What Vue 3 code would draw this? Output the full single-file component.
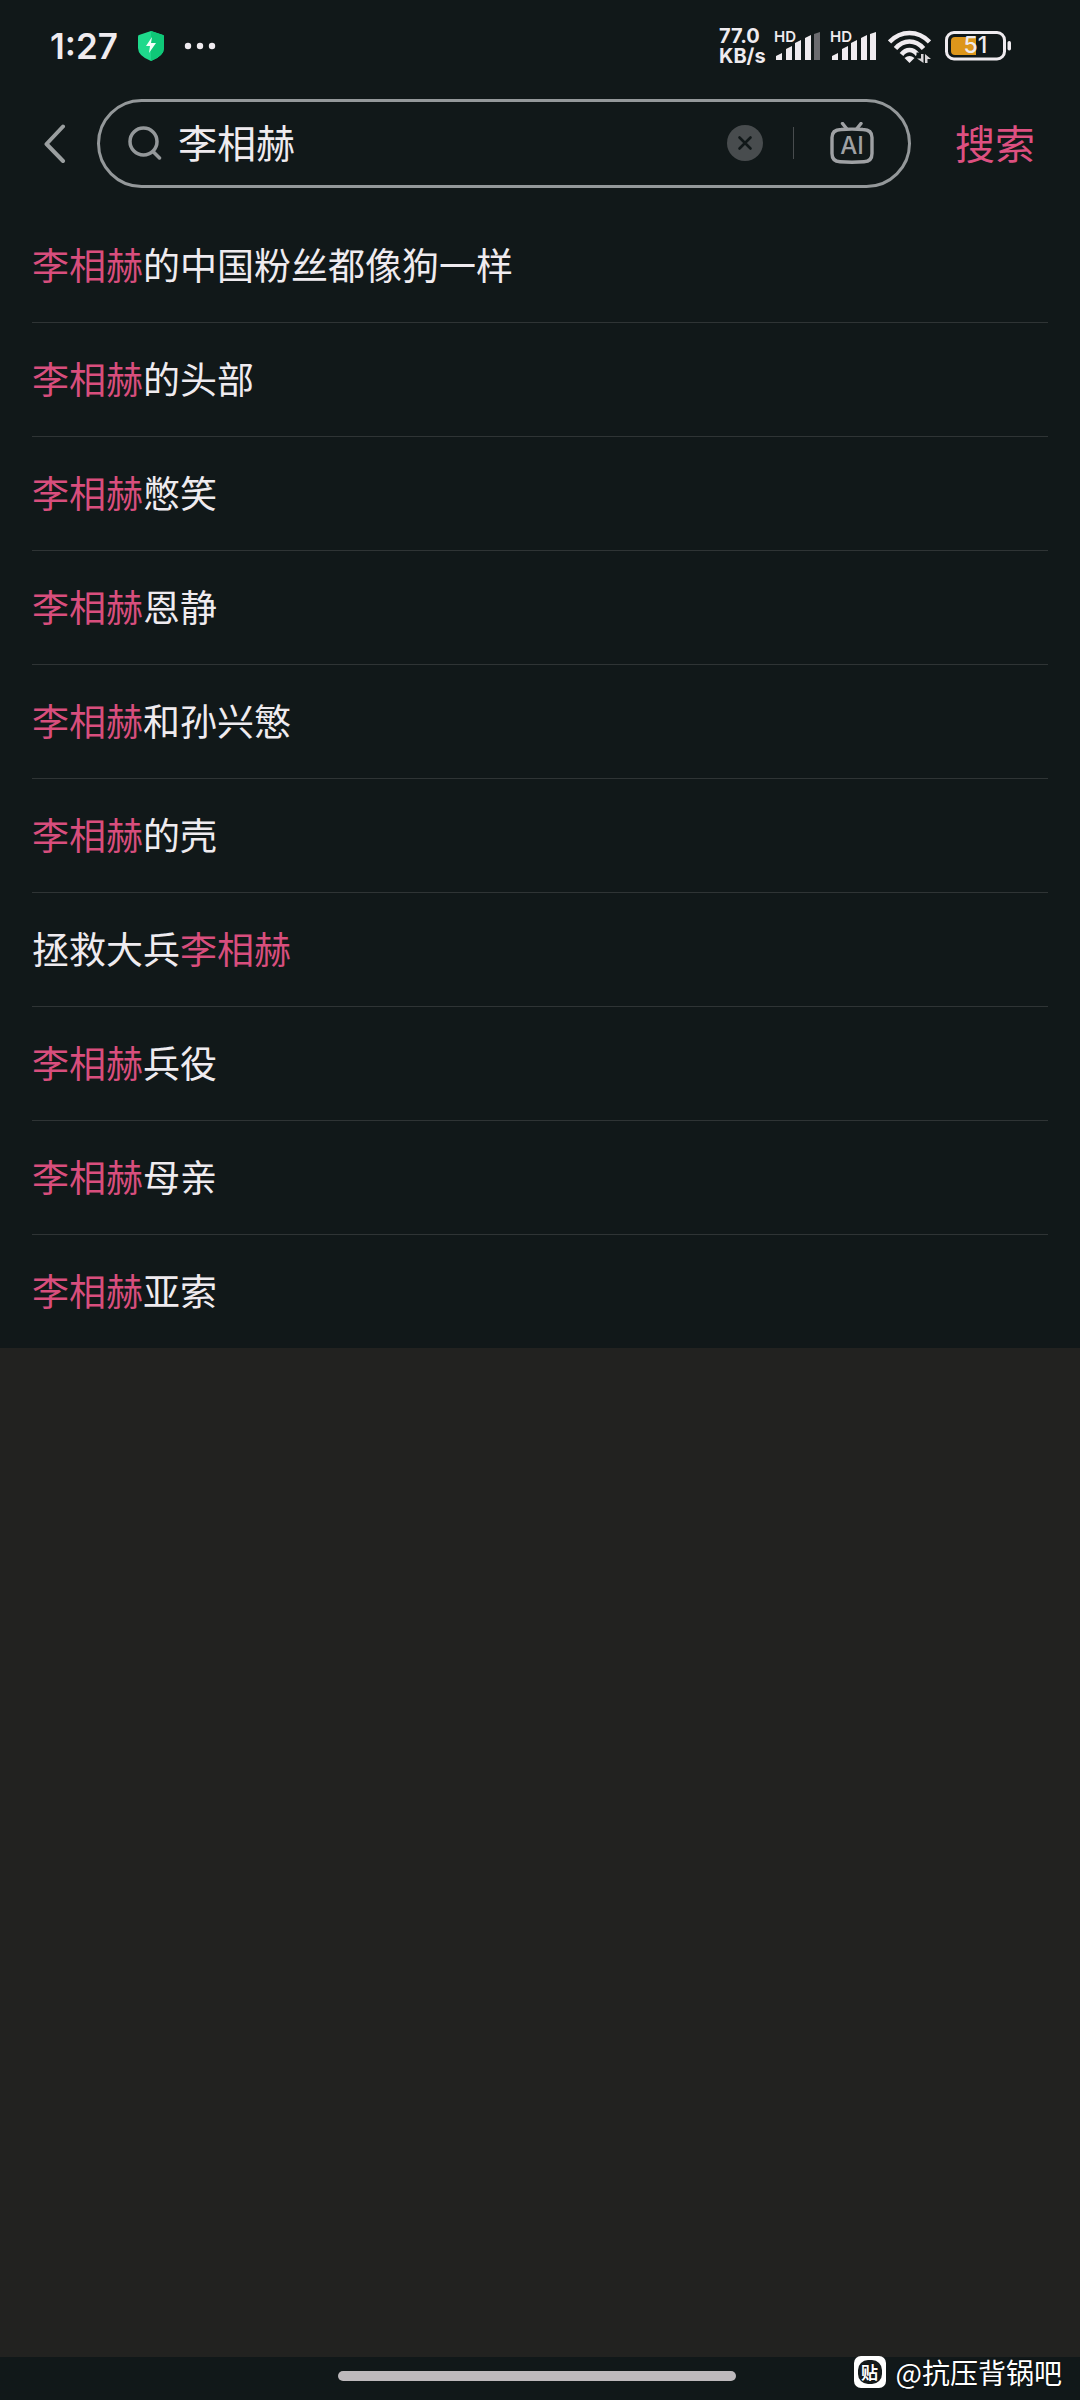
<script setup>
import { ref } from "vue";

const keyword = ref("李相赫");

// 搜尋建議，hit 為 true 的片段會以粉色顯示
const suggestions = ref([
  [{ text: "李相赫", hit: true }, { text: "的中国粉丝都像狗一样" }],
  [{ text: "李相赫", hit: true }, { text: "的头部" }],
  [{ text: "李相赫", hit: true }, { text: "憋笑" }],
  [{ text: "李相赫", hit: true }, { text: "恩静" }],
  [{ text: "李相赫", hit: true }, { text: "和孙兴慜" }],
  [{ text: "李相赫", hit: true }, { text: "的壳" }],
  [{ text: "拯救大兵" }, { text: "李相赫", hit: true }],
  [{ text: "李相赫", hit: true }, { text: "兵役" }],
  [{ text: "李相赫", hit: true }, { text: "母亲" }],
  [{ text: "李相赫", hit: true }, { text: "亚索" }],
]);

// 兩張 SIM 卡的訊號格數
const signals = [4, 5];

const bars = [
  "M0 29v-4l6-3v7z",
  "M10 29V18l6-3v14z",
  "M19 29V12l6-3v20z",
  "M29 29V7l6-3v25z",
  "M38 29V3l6-2v28z",
];

const pick = (parts) => {
  keyword.value = parts.map((p) => p.text).join("");
};
</script>

<template>
  <div class="app">
    <div class="panel">
      <div class="status-bar">
        <span class="time">1:27</span>
        <svg class="shield" width="26" height="30" viewBox="0 0 26 30">
          <path d="M13 0 25 4q1 0 1 2v11q0 8-13 13Q0 25 0 17V6q0-2 1-2z" fill="#1fd98c" />
          <path d="M13 0 25 4q1 0 1 2v11q0 8-13 13z" fill="#0fc878" />
          <path d="M14 6 8 15h4l-1 7 7-10h-5z" fill="#f3fff9" />
        </svg>
        <svg class="dots" width="32" height="8" viewBox="0 0 32 8" fill="#efebef">
          <circle cx="4" cy="4" r="3.2" />
          <circle cx="16" cy="4" r="3.2" />
          <circle cx="28" cy="4" r="3.2" />
        </svg>
        <div class="status-right">
          <div class="speed">77.0<br />KB/s</div>
          <div v-for="(level, i) in signals" :key="i" class="signal">
            <span class="hd">HD</span>
            <svg width="44" height="30" viewBox="0 0 44 30">
              <path
                v-for="(bar, index) in bars"
                :key="index"
                :d="bar"
                :fill="index < level ? '#efebef' : '#6b6b6f'"
              />
            </svg>
          </div>
          <svg class="wifi" width="43" height="33" viewBox="0 0 43 33">
            <g fill="none" stroke="#efebef" stroke-width="4.6">
              <path d="M1.5 12Q10 3 21.5 3T41.5 12" />
              <path d="M7.5 18.5q6-7 14-7t14 7" />
              <path d="M13.500 24.500q3.500-4.500 8-4.500t8 4.500" />
            </g>
            <path d="M16.500 28q5-4 10 0l-5 5z" fill="#efebef" />
            <path d="M28.500 22.500h10V33h-10z" fill="#111819" />
            <path d="M33 24h2.500v9L29 28.500h4zM37 33v-9l6 5h-3.500v4z" fill="#d8d5d8" />
          </svg>
          <div class="battery">
            <svg width="67" height="30" viewBox="0 0 67 30">
              <rect x="1.500" y="1.500" width="58" height="26.500" rx="7.500" fill="none" stroke="#efebef" stroke-width="3" />
              <path d="M10 6h21v18H10q-4 0-4-4V10q0-4 4-4z" fill="#dd961b" />
              <rect x="62.500" y="10" width="3.500" height="9.500" rx="1.700" fill="#efebef" />
            </svg>
            <span>51</span>
          </div>
        </div>
      </div>

      <form class="search-row" @submit.prevent>
        <button type="button" class="back" aria-label="返回">
          <svg width="22" height="40" viewBox="0 0 22 40">
            <path d="M19 2.500 2.500 20 19 37" fill="none" stroke="#9b9fa0" stroke-width="4" stroke-linecap="round" stroke-linejoin="round" />
          </svg>
        </button>
        <div class="search-box">
          <svg class="lens" width="34" height="34" viewBox="0 0 34 34" fill="none" stroke="#94989a" stroke-width="3.500" stroke-linecap="round">
            <circle cx="15.500" cy="15.500" r="13.500" />
            <path d="m25.500 26 6 6" />
          </svg>
          <input v-model="keyword" type="text" aria-label="搜索" />
          <button type="button" class="clear" aria-label="清除" @click="keyword = ''">
            <svg width="36" height="36" viewBox="0 0 36 36">
              <circle cx="18" cy="18" r="18" fill="#484c4e" />
              <path d="m12.500 12.500 11 11m0-11-11 11" stroke="#111819" stroke-width="2.600" stroke-linecap="round" />
            </svg>
          </button>
          <span class="divider"></span>
          <button type="button" class="ai" aria-label="AI">
            <svg width="44" height="42" viewBox="0 0 44 42" fill="none" stroke="#9fa1a4" stroke-width="3.400" stroke-linecap="round">
              <path d="m12.500 1.500 4 5M31 1.500l-4 5" />
              <path d="M11 7.500q11-.8 22 0 9 .3 9 8v16q0 8-8 8.300-12 .8-24 0-8-.3-8-8.300v-16q0-7.700 9-8z" />
            </svg>
            <span>AI</span>
          </button>
        </div>
        <button type="submit" class="submit">搜索</button>
      </form>

      <ul>
        <li v-for="(parts, index) in suggestions" :key="index">
          <button type="button" @click="pick(parts)">
            <span v-for="p in parts" :key="p.text" :class="{ hit: p.hit }">{{ p.text }}</span>
          </button>
        </li>
      </ul>
    </div>

    <div class="backdrop"></div>

    <div class="nav-bar">
      <div class="handle"></div>
      <div class="watermark">
        <span class="tieba"><span>贴</span></span>
        <span>@抗压背锅吧</span>
      </div>
    </div>
  </div>
</template>

<style>
body {
  margin: 0;
  background-color: #222220;
}
</style>

<style scoped>
.app {
  display: flex;
  flex-direction: column;
  min-height: 100vh;
  color: #efebef;
  font-family: "Noto Sans CJK SC", sans-serif;
}

button,
input {
  padding: 0;
  border: none;
  outline: none;
  background: none;
  color: inherit;
  font-family: inherit;
}

button {
  cursor: pointer;
}

svg {
  display: block;
}

.panel {
  background-color: #111819;
}

.status-bar {
  display: flex;
  align-items: center;
  box-sizing: border-box;
  height: 94px;
  padding: 0 68px 2px 50px;
  font-family: Inter, sans-serif;
}

.time {
  width: 88px;
  font-size: 35px;
  font-weight: 600;
}

.dots {
  margin-left: 20px;
}

.status-right {
  display: flex;
  align-items: center;
  margin-left: auto;
}

.speed {
  width: 57px;
  font-size: 20px;
  font-weight: 700;
  line-height: 20px;
}

.signal {
  position: relative;
  margin-right: 12px;
}

.hd {
  position: absolute;
  top: -1px;
  left: -2px;
  font-size: 15px;
  font-weight: 600;
  line-height: 14px;
}

.wifi {
  margin-right: 14px;
}

.battery {
  position: relative;
}

.battery span {
  position: absolute;
  top: 0;
  left: 0;
  width: 61px;
  font-size: 23px;
  font-weight: 500;
  line-height: 29px;
  text-align: center;
}

.search-row {
  display: flex;
  align-items: center;
  margin: 0;
  padding: 5px 45px 20px 44px;
}

.back {
  width: 53px;
}

.search-box {
  display: flex;
  flex: 1;
  align-items: center;
  box-sizing: border-box;
  height: 89px;
  min-width: 0;
  padding: 0 34px 2px 28px;
  border: 3px solid #94989a;
  border-radius: 45px;
}

.search-box input {
  flex: 1;
  min-width: 0;
  margin-left: 16px;
  padding-bottom: 4px;
  font-size: 39px;
  line-height: 56px;
}

.divider {
  width: 1px;
  height: 32px;
  margin: 0 36px 0 30px;
  background-color: #484c4e;
}

.ai {
  position: relative;
}

.ai span {
  position: absolute;
  top: 12px;
  left: 0;
  width: 44px;
  color: #9fa1a4;
  font-family: Inter, sans-serif;
  font-size: 24px;
  font-weight: 500;
  line-height: 24px;
}

.submit {
  margin-left: 44px;
  padding-bottom: 4px;
  color: #dd5080;
  font-size: 40px;
  line-height: 56px;
}

ul {
  margin: 0;
  padding: 0 32px;
  list-style: none;
}

li {
  box-sizing: border-box;
  height: 114px;
  border-top: 1px solid #2f3435;
}

li:first-child {
  border-color: transparent;
}

li button {
  width: 100%;
  height: 100%;
  padding-bottom: 4px;
  font-size: 37px;
  line-height: 56px;
  text-align: left;
}

.hit {
  color: #d84e7d;
}

.backdrop {
  flex: 1;
  background-color: #222220;
}

.nav-bar {
  position: relative;
  display: flex;
  justify-content: center;
  box-sizing: border-box;
  height: 43px;
  padding: 14px 6px 0 0;
  background-color: #111819;
}

.handle {
  width: 37%;
  height: 10px;
  border-radius: 5px;
  background-color: #bdb9bc;
}

.watermark {
  position: absolute;
  right: 18px;
  bottom: 10px;
  display: flex;
  align-items: center;
  gap: 10px;
  color: #fff;
  font-size: 28px;
  line-height: 36px;
  text-shadow: 0 0 2px #000;
}

.tieba {
  display: flex;
  align-items: center;
  justify-content: center;
  width: 32px;
  height: 32px;
  border-radius: 7px;
  background-color: #fff;
}

.tieba span {
  width: 24px;
  height: 24px;
  border-radius: 10px;
  background-color: #161c1d;
  font-size: 17px;
  font-weight: 700;
  line-height: 23px;
  text-align: center;
}
</style>
